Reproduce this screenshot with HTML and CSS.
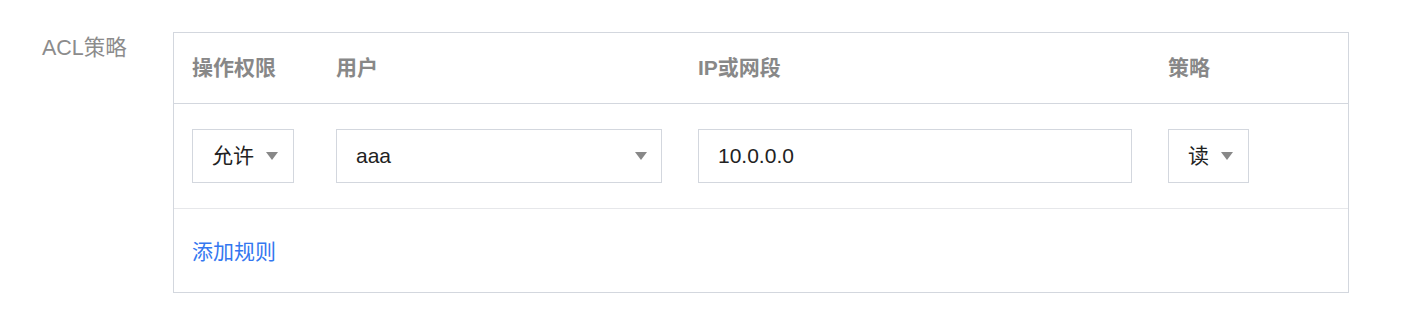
FILE: index.html
```html
<!DOCTYPE html>
<html lang="zh-CN">
<head>
<meta charset="utf-8">
<title>ACL策略</title>
<link rel="stylesheet" href="styles.css">
</head>
<body>
<div class="form-row">
  <div class="form-label">ACL策略</div>
  <div class="acl-box">
    <div class="acl-grid acl-head">
      <div class="th">操作权限</div>
      <div class="th">用户</div>
      <div class="th">IP或网段</div>
      <div class="th">策略</div>
    </div>
    <div class="acl-grid acl-row">
      <div class="td">
        <div class="select">
          <span class="select-text">允许</span>
          <span class="caret"></span>
        </div>
      </div>
      <div class="td">
        <div class="select select-user">
          <span class="select-text">aaa</span>
          <span class="caret"></span>
        </div>
      </div>
      <div class="td">
        <div class="input">10.0.0.0</div>
      </div>
      <div class="td">
        <div class="select">
          <span class="select-text">读</span>
          <span class="caret"></span>
        </div>
      </div>
    </div>
    <div class="acl-foot">
      <a class="add-link" href="#">添加规则</a>
    </div>
  </div>
</div>
</body>
</html>
```

FILE: styles.css
```css
html, body {
  margin: 0;
  padding: 0;
  background: #ffffff;
}

body {
  font-family: "Liberation Sans", "Noto Sans CJK SC", sans-serif;
  font-size: 21px;
  color: #222222;
}

.form-row {
  display: flex;
  align-items: flex-start;
  padding: 33px 0 0 42px;
}

.form-label {
  width: 131px;
  margin-top: -1px;
  line-height: 32px;
  font-size: 21.5px;
  color: #8c8c8c;
  flex-shrink: 0;
}

.acl-box {
  width: 1176px;
  box-sizing: border-box;
  border: 1px solid #d3d7de;
  margin-top: -1px;
}

.acl-grid {
  display: grid;
  grid-template-columns: 144px 362px 470px 1fr;
  padding-left: 18px;
  align-items: center;
}

.acl-head {
  height: 70px;
  border-bottom: 1px solid #d3d7de;
}

.th {
  font-weight: bold;
  color: #888888;
  line-height: 30px;
}

.acl-row {
  height: 105px;
  box-sizing: border-box;
  padding-top: 25px;
  padding-bottom: 25px;
  border-bottom: 1px solid #e6e7ea;
}

.td {
  display: flex;
  align-items: center;
}

.select,
.input {
  height: 54px;
  box-sizing: border-box;
  border: 1px solid #d3d7de;
  display: inline-flex;
  align-items: center;
  padding: 0 15px 0 19px;
  color: #222222;
  line-height: 30px;
}

.select-text {
  margin-right: 12px;
}

.select-user {
  width: 326px;
  justify-content: space-between;
  padding-right: 14px;
}

.caret {
  width: 0;
  height: 0;
  border-left: 6.5px solid transparent;
  border-right: 6.5px solid transparent;
  border-top: 8px solid #888888;
}

.input {
  width: 434px;
}

.acl-foot {
  height: 83px;
  display: flex;
  align-items: center;
  padding-left: 18px;
}

.add-link {
  color: #3477f0;
  text-decoration: none;
  line-height: 30px;
  margin-top: 2px;
}
```
